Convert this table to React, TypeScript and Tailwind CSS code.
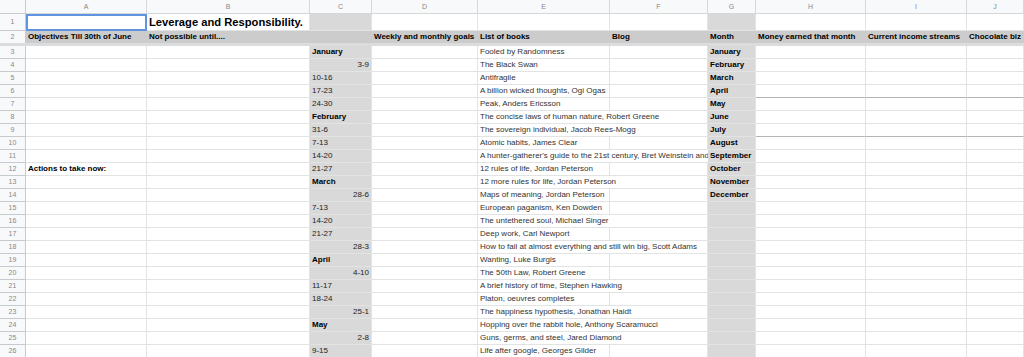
import React from "react";

const COLS =
  "grid grid-cols-[26px_121px_163px_62px_106px_132px_98px_48px_110px_101px_1fr]";

type Row = {
  a?: string;
  c?: string;
  cb?: boolean;
  cr?: boolean;
  e?: string;
  g?: string;
  dark?: boolean;
};

const rows: Row[] = [
  { c: "January", cb: true, e: "Fooled by Randomness", g: "January" },
  { c: "3-9", cr: true, e: "The Black Swan", g: "February" },
  { c: "10-16", e: "Antifragile", g: "March" },
  { c: "17-23", e: "A billion wicked thoughts, Ogi Ogas", g: "April", dark: true },
  { c: "24-30", e: "Peak, Anders Ericsson", g: "May" },
  { c: "February", cb: true, e: "The concise laws of human nature, Robert Greene", g: "June" },
  { c: "31-6", e: "The sovereign individual, Jacob Rees-Mogg", g: "July", dark: true },
  { c: "7-13", e: "Atomic habits, James Clear", g: "August" },
  {
    c: "14-20",
    e: "A hunter-gatherer's guide to the 21st century, Bret Weinstein and Heather Heying",
    g: "September",
  },
  { a: "Actions to take now:", c: "21-27", e: "12 rules of life, Jordan Peterson", g: "October" },
  { c: "March", cb: true, e: "12 more rules for life, Jordan Peterson", g: "November" },
  { c: "28-6", cr: true, e: "Maps of meaning, Jordan Peterson", g: "December" },
  { c: "7-13", e: "European paganism, Ken Dowden" },
  { c: "14-20", e: "The untethered soul, Michael Singer" },
  { c: "21-27", e: "Deep work, Carl Newport" },
  { c: "28-3", cr: true, e: "How to fail at almost everything and still win big, Scott Adams" },
  { c: "April", cb: true, e: "Wanting, Luke Burgis" },
  { c: "4-10", cr: true, e: "The 50th Law, Robert Greene" },
  { c: "11-17", e: "A brief history of time, Stephen Hawking" },
  { c: "18-24", e: "Platon, oeuvres completes" },
  { c: "25-1", cr: true, e: "The happiness hypothesis, Jonathan Haidt" },
  { c: "May", cb: true, e: "Hopping over the rabbit hole, Anthony Scaramucci" },
  { c: "2-8", cr: true, e: "Guns, germs, and steel, Jared Diamond" },
  { c: "9-15", e: "Life after google, Georges Gilder" },
];

const cell =
  "border-r border-b border-[#e2e3e3] overflow-hidden whitespace-nowrap px-[2px] text-[8px] leading-[12px] text-[#222]";
const rowNum =
  "bg-[#f8f9fa] border-r border-b border-[#c8cacb] text-[7px] leading-[12px] text-[#888] text-center";

export default function App() {
  const letters = ["A", "B", "C", "D", "E", "F", "G", "H", "I", "J"];
  return (
    <div
      className="w-[1024px] h-[357px] overflow-hidden bg-white"
      style={{ fontFamily: '"Liberation Sans", Arial, sans-serif' }}
    >
      {/* column headers */}
      <div className={`${COLS} h-[14px]`}>
        <div className="bg-[#f8f9fa] border-r border-b border-[#c8cacb]" />
        {letters.map((l) => (
          <div
            key={l}
            className="bg-[#f8f9fa] border-r border-b border-[#d5d7d8] text-[7px] leading-[13px] text-[#888] text-center"
          >
            {l}
          </div>
        ))}
        <div className="bg-[#f8f9fa] border-b border-[#d5d7d8]" />
      </div>

      {/* row 1 */}
      <div className={`${COLS} h-[17px]`}>
        <div className={`${rowNum} leading-[16px]`}>1</div>
        <div className="border-2 border-[#5f94e0] bg-white" />
        <div className="border-r border-b border-[#e2e3e3] whitespace-nowrap px-[2px] text-[11.2px] leading-[16px] font-bold text-black">
          Leverage and Responsibility.
        </div>
        <div className="bg-[#d9d9d9] border-r border-b border-[#e2e3e3]" />
        <div className={cell} />
        <div className={cell} />
        <div className={cell} />
        <div className="bg-[#d9d9d9] border-r border-b border-[#e2e3e3]" />
        <div className={cell} />
        <div className={cell} />
        <div className={cell} />
        <div className="border-b border-[#e2e3e3]" />
      </div>

      {/* row 2 */}
      <div className={`${COLS} h-[12px]`}>
        <div className={`${rowNum} border-b-0 leading-[12px]`}>2</div>
        {[
          "Objectives Till 30th of June",
          "Not possible until....",
          "",
          "Weekly and monthly goals",
          "List of books",
          "Blog",
          "Month",
          "Money earned that month",
          "Current income streams",
          "Chocolate biz",
          "",
        ].map((t, i) => (
          <div
            key={i}
            className="bg-[#cccccc] overflow-hidden whitespace-nowrap px-[2px] text-[8px] leading-[12px] font-bold text-black"
          >
            {t}
          </div>
        ))}
      </div>

      {/* frozen divider */}
      <div className="h-[3px] bg-[#dadcdd]" />

      {rows.map((r, i) => (
        <div key={i} className={`${COLS} h-[13px]`}>
          <div className={rowNum}>{i + 3}</div>
          <div className={`${cell} font-bold text-black`}>{r.a ?? ""}</div>
          <div className={cell} />
          <div
            className={`${cell} bg-[#d9d9d9] ${r.cr ? "text-right" : ""} ${
              r.cb ? "font-bold text-black" : ""
            }`}
          >
            {r.c ?? ""}
          </div>
          <div className={cell} />
          {/* E + F: E text overflows into the empty F cell */}
          <div className="col-span-2 relative overflow-hidden flex">
            <div className="w-[132px] h-[13px] border-r border-b border-[#e2e3e3]" />
            <div className="flex-1 h-[13px] border-r border-b border-[#e2e3e3]" />
            <span className="absolute left-0 top-0 h-[12px] bg-white px-[2px] whitespace-nowrap text-[8px] leading-[12px] text-[#333]">
              {r.e ?? ""}
            </span>
          </div>
          <div className={`${cell} bg-[#d9d9d9] font-bold text-black`}>{r.g ?? ""}</div>
          <div className={`${cell} ${r.dark ? "border-b-[#b5b5b5]" : ""}`} />
          <div className={`${cell} ${r.dark ? "border-b-[#b5b5b5]" : ""}`} />
          <div className={`${cell} ${r.dark ? "border-b-[#b5b5b5]" : ""}`} />
          <div className={`${cell} border-r-0 ${r.dark ? "border-b-[#b5b5b5]" : ""}`} />
        </div>
      ))}
    </div>
  );
}
